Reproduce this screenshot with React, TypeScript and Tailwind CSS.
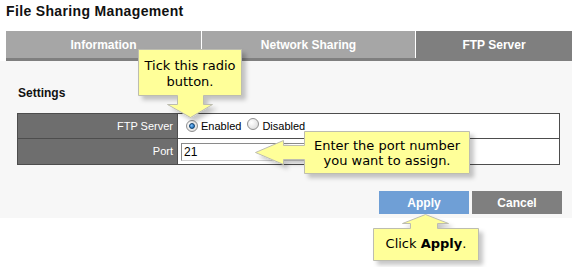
const ui = "font-['Liberation_Sans',Arial,sans-serif]";
const tip = "font-['DejaVu_Sans',Verdana,sans-serif]";

function Radio({ checked }: { checked?: boolean }) {
	return (
		<span className="relative inline-flex w-[12px] h-[12px] rounded-full border border-[#8f8f8f] bg-[radial-gradient(circle_at_35%_35%,#ffffff,#d6d6d6)] items-center justify-center">
			{checked && <span className="w-[6px] h-[6px] rounded-full bg-[radial-gradient(circle_at_35%_35%,#7fc0ff,#0a5fa8)] border border-[#0b3e6f]" />}
		</span>
	);
}

export default function App() {
	return (
		<div className={`relative w-[572px] h-[267px] bg-white overflow-hidden ${ui}`}>
			<h1 className="h-[31px] pl-[6px] pt-[3px] text-[14px] leading-[16px] font-bold tracking-[0.35px] text-[#111]">File Sharing Management</h1>

			{/* tabs */}
			<div className="ml-[6px] flex h-[27px] text-[12px] font-bold text-white">
				<div className="w-[195px] bg-[#a6a6a6] flex items-center justify-center">Information</div>
				<div className="w-[1px] bg-white" />
				<div className="w-[213px] bg-[#a6a6a6] flex items-center justify-center">Network Sharing</div>
				<div className="w-[1px] bg-white" />
				<div className="flex-1 bg-[#7f7f7f] flex items-center justify-center">FTP Server</div>
			</div>
			<div className="ml-[6px] h-[3px] bg-[#7f7f7f]" />

			{/* panel */}
			<div className="h-[157px] bg-[#f7f7f7] pt-[25px]">
				<div className="ml-[18px] h-[14px] text-[12px] leading-[14px] font-bold text-[#111]">Settings</div>
				<div className="ml-[17px] mr-[12px] mt-[13px] border border-[#4d4d4d] text-[11px]">
					<div className="flex h-[25px] border-b border-[#4d4d4d]">
						<div className="w-[160px] bg-[#6e6e6e] text-white flex items-center justify-end pr-[4px] border-r border-[#4d4d4d]">FTP Server</div>
						<div className="flex-1 bg-white flex items-center pl-[8px] text-black">
							<Radio checked />
							<span className="ml-[3px]">Enabled</span>
							<span className="ml-[6px]"><Radio /></span>
							<span className="ml-[3px]">Disabled</span>
						</div>
					</div>
					<div className="flex h-[25px]">
						<div className="w-[160px] bg-[#6e6e6e] text-white flex items-center justify-end pr-[4px] border-r border-[#4d4d4d]">Port</div>
						<div className="flex-1 bg-white flex items-center pl-[3px]">
							<div className="w-[150px] h-[18px] border border-[#8a8a8a] border-r-[#d0d0d0] border-b-[#d0d0d0] flex items-center pl-[2px] text-[12px] text-black">21</div>
						</div>
					</div>
				</div>
				<div className="mt-[26px] mr-[10px] flex justify-end gap-[3px] text-[12px] font-bold text-white">
					<div className="w-[90px] h-[23px] bg-[#6f9fd6] flex items-center justify-center">Apply</div>
					<div className="w-[90px] h-[23px] bg-[#7f7f7f] flex items-center justify-center">Cancel</div>
				</div>
			</div>

			{/* callouts */}
			<svg className="absolute inset-0 pointer-events-none" width="572" height="267" viewBox="0 0 572 267">
				<defs>
					<filter id="sh" x="-20%" y="-20%" width="140%" height="140%">
						<feDropShadow dx="4" dy="4" stdDeviation="2" floodColor="#000" floodOpacity="0.22" />
					</filter>
				</defs>
				<g fill="#ffff99" stroke="#bdbdb0" strokeWidth="1" filter="url(#sh)">
					<path d="M138.5,49.5 H241.5 V95.5 H203.5 V104.5 H212.5 L190.5,117.5 L167.5,104.5 H177.5 V95.5 H138.5 Z" />
					<path d="M304.5,131.5 H469.5 V173.5 H304.5 V159.5 H283.5 V164.5 L255.5,152.5 L283.5,140.5 V145.5 H304.5 Z" />
					<path d="M373.5,228.5 H410.5 V223.5 H402.5 L425.5,214.5 L448.5,223.5 H437.5 V228.5 H478.5 V260.5 H373.5 Z" />
				</g>
			</svg>
			<div className={`absolute left-[139px] top-[58px] w-[102px] text-center text-[13px] leading-[16px] text-black ${tip}`}>
				Tick this radio<br />button.
			</div>
			<div className={`absolute left-[305px] top-[138px] w-[164px] text-center text-[13px] leading-[15px] text-black ${tip}`}>
				Enter the port number<br />you want to assign.
			</div>
			<div className={`absolute left-[374px] top-[236px] w-[104px] text-center text-[13px] leading-[16px] text-black ${tip}`}>
				Click <b>Apply</b>.
			</div>
		</div>
	);
}
